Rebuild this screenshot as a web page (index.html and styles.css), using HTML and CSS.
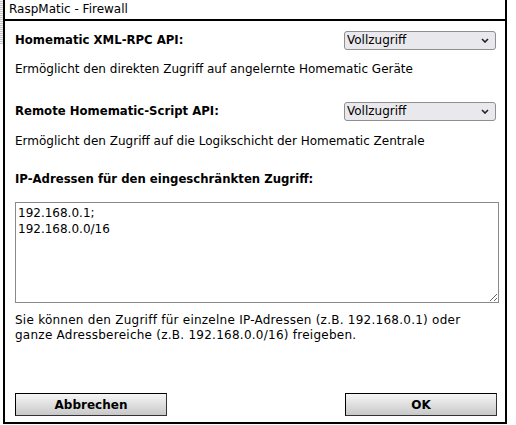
FILE: index.html
```html
<!DOCTYPE html>
<html lang="de">
<head>
<meta charset="utf-8">
<title>RaspMatic - Firewall</title>
<link rel="stylesheet" href="styles.css">
</head>
<body>
<div class="backdrop"></div>
<div class="dialog">
  <div class="titlebar">RaspMatic - Firewall</div>
  <div class="content">
    <div class="row">
      <span class="label">Homematic XML-RPC API:</span>
      <select class="select"><option>Vollzugriff</option></select>
    </div>
    <p class="desc">Ermöglicht den direkten Zugriff auf angelernte Homematic Geräte</p>
    <div class="row row-second">
      <span class="label">Remote Homematic-Script API:</span>
      <select class="select"><option>Vollzugriff</option></select>
    </div>
    <p class="desc desc-second">Ermöglicht den Zugriff auf die Logikschicht der Homematic Zentrale</p>
    <p class="label ip-label">IP-Adressen für den eingeschränkten Zugriff:</p>
    <textarea class="ips">192.168.0.1;
192.168.0.0/16</textarea>
    <p class="hint">Sie können den Zugriff für einzelne IP-Adressen (z.B. 192.168.0.1) oder<br>ganze Adressbereiche (z.B. 192.168.0.0/16) freigeben.</p>
    <div class="buttons">
      <button class="btn">Abbrechen</button>
      <button class="btn">OK</button>
    </div>
  </div>
</div>
</body>
</html>
```

FILE: styles.css
```css
html, body {
  margin: 0;
  padding: 0;
  background: #fff;
}
body {
  font-family: "DejaVu Sans", Verdana, sans-serif;
  font-size: 12px;
  color: #000;
  position: relative;
  width: 516px;
  height: 425px;
  overflow: hidden;
}
.backdrop {
  position: absolute;
  left: 0;
  top: 0;
  width: 3px;
  height: 44px;
  background-image: repeating-linear-gradient(0deg, #c8c8c8 0 1px, #f4f4f4 1px 2px);
}
.dialog {
  margin-left: 3px;
  width: 500px;
  height: 422px;
  border-left: 2px solid #000;
  border-right: 2px solid #000;
  border-bottom: 2px solid #000;
  box-sizing: content-box;
  display: flex;
  flex-direction: column;
}
.titlebar {
  height: 19px;
  line-height: 19px;
  border-bottom: 2px solid #000;
  padding-left: 4px;
  font-size: 12px;
  font-family: "DejaVu Sans", Tahoma, sans-serif;
}
.content {
  flex: 1;
  display: flex;
  flex-direction: column;
  padding: 10px 8px 6px 10px;
}
.row {
  display: flex;
  justify-content: space-between;
  align-items: center;
  height: 18px;
}
.row-second {
  margin-top: 25px;
}
.label {
  font-weight: bold;
  font-size: 11.7px;
}
.desc {
  margin: 13px 0 0 0;
  line-height: 15px;
}
.desc-second {
  margin-top: 14px;
}
.select {
  appearance: none;
  -webkit-appearance: none;
  width: 152px;
  height: 19px;
  margin-right: 1px;
  border: 1px solid #8f8f8f;
  border-radius: 3px;
  padding: 0 0 0 2px;
  font-family: "DejaVu Sans", Verdana, sans-serif;
  font-size: 12px;
  color: #000;
  background-color: #e9e9ed;
  background-image: url("data:image/svg+xml;utf8,<svg xmlns='http://www.w3.org/2000/svg' width='8' height='5' viewBox='0 0 8 5'><path d='M1 1 L4 4 L7 1' fill='none' stroke='%23222' stroke-width='1.6'/></svg>");
  background-repeat: no-repeat;
  background-position: right 6px center;
}
.ip-label {
  margin: 23px 0 0 0;
  line-height: 15px;
}
.ips {
  margin-top: 15px;
  width: 484px;
  height: 101px;
  box-sizing: border-box;
  border: 1px solid #8a8a8a;
  padding: 2px 2px;
  font-family: "DejaVu Sans", Verdana, sans-serif;
  font-size: 12px;
  line-height: 16px;
  resize: both;
  color: #000;
}
.hint {
  margin: 10px 0 0 0;
  line-height: 15px;
  letter-spacing: 0.25px;
}
.buttons {
  margin-top: auto;
  display: flex;
  justify-content: space-between;
}
.btn {
  width: 152px;
  height: 23px;
  border: 1px solid #000;
  border-right-color: #333;
  border-bottom-color: #333;
  background: linear-gradient(#f6f6f6, #c8c8c8);
  font-family: "DejaVu Sans", Verdana, sans-serif;
  font-size: 12px;
  font-weight: bold;
  color: #000;
  padding: 0;
}
```
